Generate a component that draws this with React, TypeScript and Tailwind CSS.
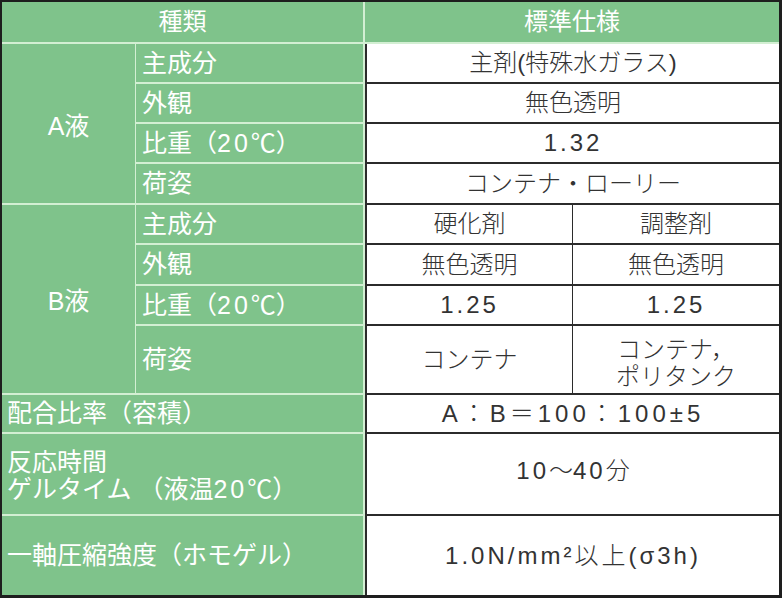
import React from "react";

const green = "bg-[#7fc38b] text-white";
const lineG = "border-[#d3efd3]";
const lineD = "border-[#2b2b2b]";

function Label({ children, last }: { children: React.ReactNode; last?: boolean }) {
  return (
    <div className={`${green} ${lineG} border-r-2 ${last ? "" : "border-b-2"} flex items-center pl-[6px] text-[25px]`}>
      {children}
    </div>
  );
}

function Value({
  children,
  span,
  mid,
  last,
}: {
  children: React.ReactNode;
  span?: boolean;
  mid?: boolean;
  last?: boolean;
}) {
  return (
    <div
      className={`bg-white text-[#333] font-light ${lineD} ${span ? "col-span-2" : ""} ${mid ? "border-l" : "border-l-2"} ${
        last ? "" : "border-b-2"
      } flex items-center justify-center text-center`}
    >
      {children}
    </div>
  );
}

// numbers in the picture are set wide
function Num({ children }: { children: React.ReactNode }) {
  return <span className="tracking-[3px]">{children}</span>;
}

export default function App() {
  return (
    <div
      className="w-[782px] h-[598px] bg-white border-l-2 border-t-2 border-r-[3px] border-b-[3px] border-[#1e1e1e] grid grid-cols-[134px_229px_207px_207px] grid-rows-[42px_40px_40px_40px_41px_40px_41px_40px_69px_39px_82px_79px] text-[24px] leading-none"
      style={{ fontFamily: '"Liberation Sans", "Noto Sans CJK JP", sans-serif' }}
    >
      {/* header */}
      <div className={`${green} ${lineG} col-span-2 border-b-2 border-r-2 flex items-center justify-center`}>種類</div>
      <div className={`${green} ${lineG} col-span-2 border-b-2 flex items-center justify-center`}>標準仕様</div>

      {/* A液 */}
      <div className={`${green} ${lineG} row-span-4 border-r border-b-2 flex items-center justify-center pt-[6px] text-[25px]`}>
        A液
      </div>
      <Label>主成分</Label>
      <Value span>主剤(特殊水ガラス)</Value>
      <Label>外観</Label>
      <Value span>無色透明</Value>
      <Label>
        <span>
          比重（<Num>20</Num>℃）
        </span>
      </Label>
      <Value span>
        <Num>1.32</Num>
      </Value>
      <Label>荷姿</Label>
      <Value span>コンテナ・ローリー</Value>

      {/* B液 */}
      <div className={`${green} ${lineG} row-span-4 border-r border-b-2 flex items-center justify-center pt-[4px] text-[25px]`}>
        B液
      </div>
      <Label>主成分</Label>
      <Value>硬化剤</Value>
      <Value mid>調整剤</Value>
      <Label>外観</Label>
      <Value>無色透明</Value>
      <Value mid>無色透明</Value>
      <Label>
        <span>
          比重（<Num>20</Num>℃）
        </span>
      </Label>
      <Value>
        <Num>1.25</Num>
      </Value>
      <Value mid>
        <Num>1.25</Num>
      </Value>
      <Label>荷姿</Label>
      <Value>コンテナ</Value>
      <Value mid>
        <div className="leading-[27px] pt-[6px]">
          コンテナ，
          <br />
          ポリタンク
        </div>
      </Value>

      {/* 配合比率 */}
      <div className={`${green} ${lineG} col-span-2 border-r-2 border-b-2 flex items-center pl-[5px] text-[25px]`}>
        配合比率（容積）
      </div>
      <Value span>
        <span className="tracking-[4px]">A：B＝100：100±5</span>
      </Value>

      <div className={`${green} ${lineG} col-span-2 border-r-2 border-b-2 flex items-center pl-[5px] text-[25px]`}>
        <div className="leading-[27px] pt-[3px]">
          反応時間
          <br />
          ゲルタイム （液温<Num>20</Num>℃）
        </div>
      </div>
      <Value span>
        <span className="-mt-[6px]">
          <Num>10</Num>〜<Num>40</Num>分
        </span>
      </Value>

      <div className={`${green} ${lineG} col-span-2 border-r-2 flex items-center pl-[5px] text-[25px]`}>
        一軸圧縮強度（ホモゲル）
      </div>
      <Value span last>
        <span className="tracking-[3px]">1.0N/mm²以上(σ3h)</span>
      </Value>
    </div>
  );
}
